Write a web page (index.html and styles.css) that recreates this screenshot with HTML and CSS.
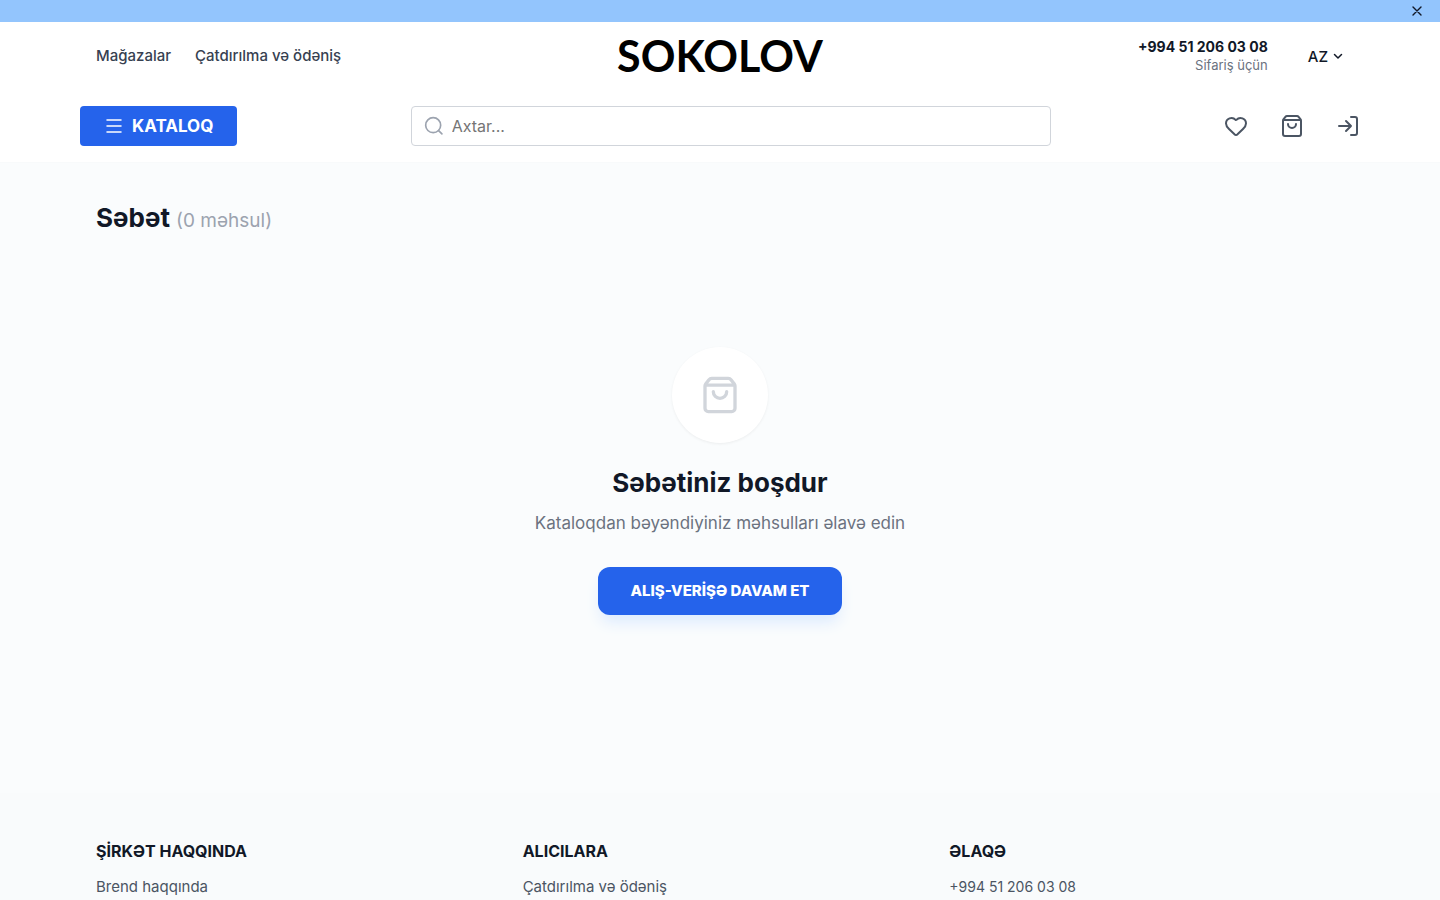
FILE: index.html
```
<!DOCTYPE html>
<html lang="az">
<head>
    <meta charset="UTF-8">
    <meta name="viewport" content="width=device-width, initial-scale=1.0">
    <title>Səbət - SOKOLOV</title>
    <link rel="stylesheet" href="styles.css">
</head>
<body>
    <div class="promo-bar">
        <button class="promo-close" aria-label="Bağla">
            <svg width="14" height="14" viewBox="0 0 14 14" stroke-width="1.4"><path d="M3 3l8 8M11 3l-8 8"/></svg>
        </button>
    </div>

    <header class="header">
        <div class="container top-row">
            <nav class="top-nav">
                <a href="#">Mağazalar</a>
                <a href="#">Çatdırılma və ödəniş</a>
            </nav>
            <a href="#" class="logo">SOKOLOV</a>
            <div class="top-right">
                <div class="phone">
                    <a href="tel:+994512060308">+994 51 206 03 08</a>
                    <span>Sifariş üçün</span>
                </div>
                <button class="lang">
                    AZ
                    <svg width="12" height="12" viewBox="0 0 24 24" stroke-width="3"><path d="m5 9 7 7 7-7"/></svg>
                </button>
            </div>
        </div>

        <div class="container main-row">
            <button class="catalog-btn">
                <svg width="20" height="20" viewBox="0 0 20 20" stroke-width="1.5"><path d="M3 4h14M3 10h14M3 16h14"/></svg>
                KATALOQ
            </button>
            <form class="search">
                <svg width="20" height="20" viewBox="0 0 24 24" stroke-width="2"><circle cx="11" cy="11" r="9"/><path d="m21.5 21.5-4-4"/></svg>
                <input type="text" placeholder="Axtar..." aria-label="Axtar">
            </form>
            <div class="actions">
                <a href="#" aria-label="Seçilmişlər">
                    <svg width="24" height="24" viewBox="0 0 24 24" stroke-width="2"><path d="M2 9.5a5.5 5.5 0 0 1 9.591-3.676.56.56 0 0 0 .818 0A5.49 5.49 0 0 1 22 9.5c0 2.29-1.5 4-3 5.5l-5.492 5.313a2 2 0 0 1-3 .019L5 15c-1.5-1.5-3-3.2-3-5.5"/></svg>
                </a>
                <a href="#" aria-label="Səbət">
                    <svg width="24" height="24" viewBox="0 0 24 24" stroke-width="2"><path d="M16 10a4 4 0 0 1-8 0M3.103 6.034h17.794M3.4 5.467a2 2 0 0 0-.4 1.2V20a2 2 0 0 0 2 2h14a2 2 0 0 0 2-2V6.667a2 2 0 0 0-.4-1.2l-2-2.667A2 2 0 0 0 17 2H7a2 2 0 0 0-1.6.8z"/></svg>
                </a>
                <a href="#" aria-label="Daxil ol">
                    <svg width="24" height="24" viewBox="0 0 24 24" stroke-width="2"><path d="m10 17 5-5-5-5M15 12H3M15 3h4a2 2 0 0 1 2 2v14a2 2 0 0 1-2 2h-4"/></svg>
                </a>
            </div>
        </div>
    </header>

    <main class="container cart">
        <h1>Səbət <span>(0 məhsul)</span></h1>
        <section class="empty">
            <div class="empty-icon">
                <svg width="40" height="40" viewBox="0 0 24 24" stroke-width="2"><path d="M16 10a4 4 0 0 1-8 0M3.103 6.034h17.794M3.4 5.467a2 2 0 0 0-.4 1.2V20a2 2 0 0 0 2 2h14a2 2 0 0 0 2-2V6.667a2 2 0 0 0-.4-1.2l-2-2.667A2 2 0 0 0 17 2H7a2 2 0 0 0-1.6.8z"/></svg>
            </div>
            <h2>Səbətiniz boşdur</h2>
            <p>Kataloqdan bəyəndiyiniz məhsulları əlavə edin</p>
            <a href="#" class="continue-btn">ALIŞ-VERİŞƏ DAVAM ET</a>
        </section>
    </main>

    <footer class="footer">
        <div class="container footer-grid">
            <div>
                <h3>ŞİRKƏT HAQQINDA</h3>
                <a href="#">Brend haqqında</a>
            </div>
            <div>
                <h3>ALICILARA</h3>
                <a href="#">Çatdırılma və ödəniş</a>
            </div>
            <div>
                <h3>ƏLAQƏ</h3>
                <a href="tel:+994512060308" class="footer-phone">+994 51 206 03 08</a>
            </div>
        </div>
    </footer>
</body>
</html>
```
FILE: styles.css
```
* {
    box-sizing: border-box;
}

body {
    margin: 0;
    background: #fafcfd;
    color: #111827;
    font-family: Inter, sans-serif;
    font-size: 17px;
    line-height: 24px;
}

h1, h2, h3, p {
    margin: 0;
}

a {
    color: inherit;
    text-decoration: none;
}

button {
    border: none;
    background: none;
    padding: 0;
    color: inherit;
    font-family: inherit;
    cursor: pointer;
}

svg {
    display: block;
    flex-shrink: 0;
    fill: none;
    stroke: currentColor;
    stroke-linecap: round;
    stroke-linejoin: round;
}

.container {
    width: 100%;
    max-width: 1280px;
    margin: 0 auto;
}

/* Promo */
.promo-bar {
    display: flex;
    justify-content: flex-end;
    align-items: center;
    height: 22px;
    padding: 0 16px;
    background: #93c5fd;
}

/* Header */
.header {
    background: white;
    box-shadow: 0 1px 0 #f8fafb;
}

.top-row {
    display: grid;
    grid-template-columns: 1fr auto 1fr;
    align-items: center;
    height: 68px;
    padding: 0 16px;
}

.top-nav {
    display: flex;
    gap: 24px;
    font-size: 15px;
    font-weight: 500;
    color: #374151;
}

.logo {
    font-family: Lato, sans-serif;
    font-size: 43px;
    line-height: 48px;
    font-weight: 700;
    color: black;
}

.top-right {
    display: flex;
    justify-content: flex-end;
    align-items: center;
    gap: 40px;
}

.phone {
    display: flex;
    flex-direction: column;
    align-items: flex-end;
    font-size: 14px;
    line-height: 18px;
    font-weight: 700;
}

.phone span {
    font-size: 13px;
    font-weight: 400;
    color: #6b7280;
}

.lang {
    display: flex;
    align-items: center;
    gap: 4px;
    font-size: 15px;
    font-weight: 500;
}

.main-row {
    display: flex;
    justify-content: space-between;
    align-items: center;
    padding: 16px 0;
}

.catalog-btn {
    display: flex;
    align-items: center;
    gap: 8px;
    height: 40px;
    padding: 0 24px;
    border-radius: 4px;
    background: #2563eb;
    color: white;
    font-size: 17px;
    font-weight: 700;
}

.search {
    display: flex;
    align-items: center;
    gap: 8px;
    width: 50%;
    height: 40px;
    padding: 0 12px;
    border: 1px solid #d1d5db;
    border-radius: 4px;
    color: #9ca3af;
}

.search input {
    flex: 1;
    border: none;
    outline: none;
    padding: 0;
    background: none;
    color: #111827;
    font-family: inherit;
    font-size: 16px;
}

.search input::placeholder {
    color: #757575;
}

.actions {
    display: flex;
    gap: 32px;
    color: #4b5563;
}

/* Cart */
.cart {
    padding: 40px 16px 98px;
}

.cart h1 {
    font-size: 26px;
    line-height: 32px;
}

.cart h1 span {
    font-size: 19px;
    font-weight: 400;
    color: #9ca3af;
}

.empty {
    display: flex;
    flex-direction: column;
    align-items: center;
    margin-top: 30px;
    padding: 80px 0;
    text-align: center;
}

.empty-icon {
    display: flex;
    justify-content: center;
    align-items: center;
    width: 96px;
    height: 96px;
    margin-bottom: 24px;
    border-radius: 50%;
    background: white;
    box-shadow: 0 1px 3px rgba(0,0,0,0.06);
    color: #d1d5db;
}

.empty h2 {
    margin-bottom: 12px;
    font-size: 26px;
    line-height: 32px;
}

.empty p {
    margin-bottom: 32px;
    color: #6b7280;
}

.continue-btn {
    padding: 12px 32px;
    border-radius: 12px;
    background: #2563eb;
    box-shadow: 0 10px 15px -3px #dbeafe;
    color: white;
    font-size: 15px;
    font-weight: 800;
}

/* Footer */
.footer {
    padding: 48px 0;
    background: #f9fbfc;
}

.footer-grid {
    display: grid;
    grid-template-columns: repeat(3, 1fr);
    gap: 32px;
    padding: 0 16px;
    font-size: 15px;
    line-height: 20px;
    color: #4b5563;
}

.footer h3 {
    margin-bottom: 16px;
    color: #111827;
    font-size: 16px;
}

.footer-phone {
    font-size: 14px;
}
```
